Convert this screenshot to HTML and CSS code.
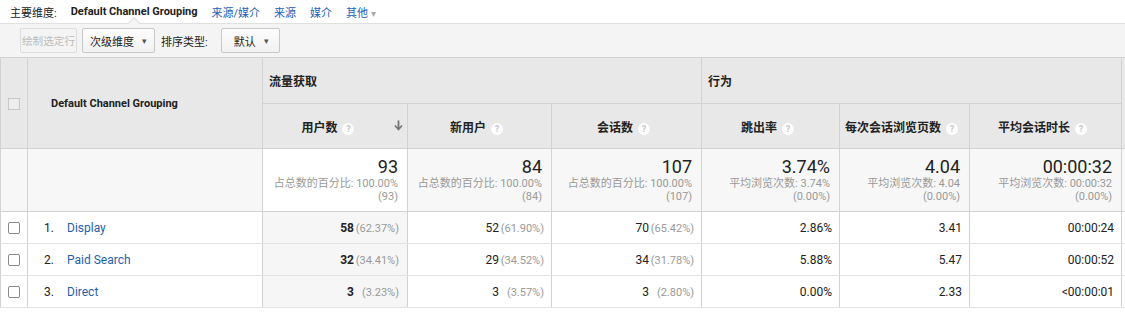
FILE: index.html
```html
<!DOCTYPE html>
<html lang="zh-CN">
<head>
    <meta charset="UTF-8">
    <title>Default Channel Grouping</title>
    <link rel="stylesheet" href="styles.css">
</head>
<body>
    <div class="topbar">
        <span class="dim-label">主要维度:</span>
        <span class="dim-active">Default Channel Grouping</span>
        <a class="dim-link">来源/媒介</a>
        <a class="dim-link">来源</a>
        <a class="dim-link">媒介</a>
        <a class="dim-link">其他 <span class="caret-gray">▾</span></a>
    </div>
    <div class="toolbar">
        <button class="btn btn-disabled">绘制选定行</button>
        <button class="btn btn-dim">次级维度 <span class="caret">▾</span></button>
        <span class="sort-label">排序类型:</span>
        <button class="btn btn-sort">默认 <span class="caret">▾</span></button>
    </div>
    <div class="table-wrap">
    <table class="report">
        <colgroup>
            <col class="c-check">
            <col class="c-dim">
            <col class="c-users">
            <col class="c-new">
            <col class="c-sess">
            <col class="c-bounce">
            <col class="c-pages">
            <col class="c-dur">
            <col class="c-more">
        </colgroup>
        <thead>
            <tr class="group-row">
                <th rowspan="2" class="check-head"><span class="box box-off"></span></th>
                <th rowspan="2" class="dim-head">Default Channel Grouping</th>
                <th colspan="3" class="group">流量获取</th>
                <th colspan="3" class="group">行为</th>
                <th rowspan="2"></th>
            </tr>
            <tr class="metric-row">
                <th class="sorted-head">用户数 <span class="help">?</span>
                    <svg class="sort-arrow" width="9" height="11" viewBox="0 0 9 11"><path d="M4.5 0.5v8M1 5.5l3.5 4 3.5-4" fill="none" stroke="#777" stroke-width="1.8"/></svg>
                </th>
                <th>新用户 <span class="help">?</span></th>
                <th>会话数 <span class="help">?</span></th>
                <th>跳出率 <span class="help">?</span></th>
                <th>每次会话浏览页数 <span class="help">?</span></th>
                <th>平均会话时长 <span class="help">?</span></th>
            </tr>
        </thead>
        <tbody>
            <tr class="total-row">
                <td></td>
                <td></td>
                <td class="total sorted-total"><div class="big">93</div><div class="sub">占总数的百分比: 100.00%</div><div class="sub">(93)</div></td>
                <td class="total"><div class="big">84</div><div class="sub">占总数的百分比: 100.00%</div><div class="sub">(84)</div></td>
                <td class="total"><div class="big">107</div><div class="sub">占总数的百分比: 100.00%</div><div class="sub">(107)</div></td>
                <td class="total"><div class="big">3.74%</div><div class="sub">平均浏览次数: 3.74%</div><div class="sub">(0.00%)</div></td>
                <td class="total"><div class="big">4.04</div><div class="sub">平均浏览次数: 4.04</div><div class="sub">(0.00%)</div></td>
                <td class="total"><div class="big">00:00:32</div><div class="sub">平均浏览次数: 00:00:32</div><div class="sub">(0.00%)</div></td>
                <td></td>
            </tr>
            <tr class="data-row">
                <td class="check-cell"><span class="box"></span></td>
                <td class="name"><span class="idx">1.</span><a class="link">Display</a></td>
                <td class="num sorted"><b>58</b><span class="pct">(62.37%)</span></td>
                <td class="num">52<span class="pct">(61.90%)</span></td>
                <td class="num">70<span class="pct">(65.42%)</span></td>
                <td class="num">2.86%</td>
                <td class="num">3.41</td>
                <td class="num">00:00:24</td>
                <td></td>
            </tr>
            <tr class="data-row">
                <td class="check-cell"><span class="box"></span></td>
                <td class="name"><span class="idx">2.</span><a class="link">Paid Search</a></td>
                <td class="num sorted"><b>32</b><span class="pct">(34.41%)</span></td>
                <td class="num">29<span class="pct">(34.52%)</span></td>
                <td class="num">34<span class="pct">(31.78%)</span></td>
                <td class="num">5.88%</td>
                <td class="num">5.47</td>
                <td class="num">00:00:52</td>
                <td></td>
            </tr>
            <tr class="data-row">
                <td class="check-cell"><span class="box"></span></td>
                <td class="name"><span class="idx">3.</span><a class="link">Direct</a></td>
                <td class="num sorted"><b>3</b><span class="pct">(3.23%)</span></td>
                <td class="num">3<span class="pct">(3.57%)</span></td>
                <td class="num">3<span class="pct">(2.80%)</span></td>
                <td class="num">0.00%</td>
                <td class="num">2.33</td>
                <td class="num">&lt;00:00:01</td>
                <td></td>
            </tr>
        </tbody>
    </table>
    </div>
</body>
</html>
```

FILE: styles.css
```css
body {
    margin: 0;
    width: 1125px;
    overflow: hidden;
    font-family: Roboto, "Noto Sans CJK SC", sans-serif;
    font-size: 12px;
    color: #222;
    background: #fff;
}

/* primary dimension bar */
.topbar {
    height: 23px;
    display: flex;
    align-items: center;
    gap: 14px;
    padding-left: 10px;
    border-bottom: 1px solid #e0e0e0;
    font-size: 11px;
}
.dim-active {
    position: relative;
    font-weight: bold;
    font-size: 11px;
    height: 23px;
    line-height: 23px;
}
.dim-active::before,
.dim-active::after {
    content: "";
    position: absolute;
    left: 50%;
    margin-left: -7px;
    border: 7px solid transparent;
    border-top: 0;
}
.dim-active::before {
    bottom: -1px;
    border-bottom-color: #d8d8d8;
}
.dim-active::after {
    bottom: -2px;
    border-bottom-color: #f4f4f4;
}
.dim-link {
    color: #2160b8;
    cursor: pointer;
}
.caret-gray {
    color: #aaa;
    font-size: 10px;
}

/* toolbar */
.toolbar {
    height: 33px;
    display: flex;
    align-items: center;
    padding-left: 20px;
    background: #f4f4f4;
    font-size: 11px;
}
.btn {
    height: 25px;
    display: flex;
    align-items: center;
    justify-content: space-between;
    border: 1px solid #c8c8c8;
    border-radius: 2px;
    background: linear-gradient(#fdfdfd, #f1f1f1);
    font-family: inherit;
    font-size: 11px;
    color: #222;
    padding: 0 7px;
    white-space: nowrap;
}
.btn-disabled {
    width: 57px;
    padding: 0;
    font-size: 10.6px;
    color: #bbb;
    border-color: #ddd;
    background: #f4f4f4;
    justify-content: center;
}
.btn-dim {
    width: 73px;
    margin-left: 5px;
}
.btn-sort {
    width: 59px;
    margin-left: 13px;
    padding: 0 10px 0 12px;
}
.caret {
    color: #555;
    font-size: 9px;
}
.sort-label {
    margin-left: 6px;
}

/* report table */
.table-wrap {
    width: 1125px;
    overflow: hidden;
}
.report {
    border-collapse: collapse;
    table-layout: fixed;
    width: 1222px;
}
.c-check { width: 27px; }
.c-dim { width: 235px; }
.c-users { width: 145px; }
.c-new { width: 144px; }
.c-sess { width: 150px; }
.c-bounce { width: 138px; }
.c-pages { width: 130px; }
.c-dur { width: 152px; }
.c-more { width: 101px; }

.report th,
.report td {
    border: 1px solid #d2d2d2;
    padding: 0;
}
.report th {
    background: #e8e8e8;
    font-size: 12px;
    font-weight: bold;
    white-space: nowrap;
}
.group-row {
    height: 46px;
}
.metric-row {
    height: 45px;
}
.group {
    text-align: left;
    padding-left: 6px !important;
}
.dim-head {
    text-align: left;
    padding-left: 23px !important;
    font-size: 11px !important;
}
.check-head {
    text-align: center;
}
.metric-row th {
    text-align: center;
    padding-right: 6px !important;
}
.metric-row .sorted-head {
    position: relative;
    padding-right: 14px !important;
}
.sort-arrow {
    position: absolute;
    right: 4px;
    top: 16px;
}
.help {
    display: inline-block;
    width: 12px;
    height: 12px;
    line-height: 12px;
    margin-left: 2px;
    border-radius: 50%;
    background: #fdfdfd;
    color: #c8c8c8;
    font-size: 9px;
    font-weight: bold;
    text-align: center;
    vertical-align: 0;
}

.box {
    display: inline-block;
    width: 10px;
    height: 10px;
    border: 1px solid #8a8a8a;
    border-radius: 2px;
    background: #fff;
    vertical-align: middle;
}
.box-off {
    border-color: #c8c8c8;
    border-radius: 0;
    background: #eee;
}

/* totals row */
.total-row {
    height: 63px;
}
.total-row td {
    background: #f7f7f7;
}
.total-row .sorted-total {
    background: #fff;
}
.total {
    text-align: right;
    padding-right: 9px !important;
    color: #999;
}
.total .big {
    font-size: 18px;
    line-height: 20px;
    color: #222;
}
.total .sub {
    font-size: 11px;
    line-height: 13px;
}

/* data rows */
.data-row {
    height: 32px;
}
.data-row td {
    border-top-color: #e2e2e2;
    border-bottom-color: #e2e2e2;
}
.check-cell {
    text-align: center;
}
.name {
    padding-left: 16px !important;
}
.idx {
    display: inline-block;
    width: 23px;
}
.link {
    color: #1f5fae;
    cursor: pointer;
}
.num {
    text-align: right;
    padding-right: 7px !important;
}
.num.sorted {
    background: #f6f6f6;
    padding-right: 8px !important;
}
.pct {
    display: inline-block;
    width: 45px;
    text-align: right;
    font-size: 11px;
    color: #999;
}
```
